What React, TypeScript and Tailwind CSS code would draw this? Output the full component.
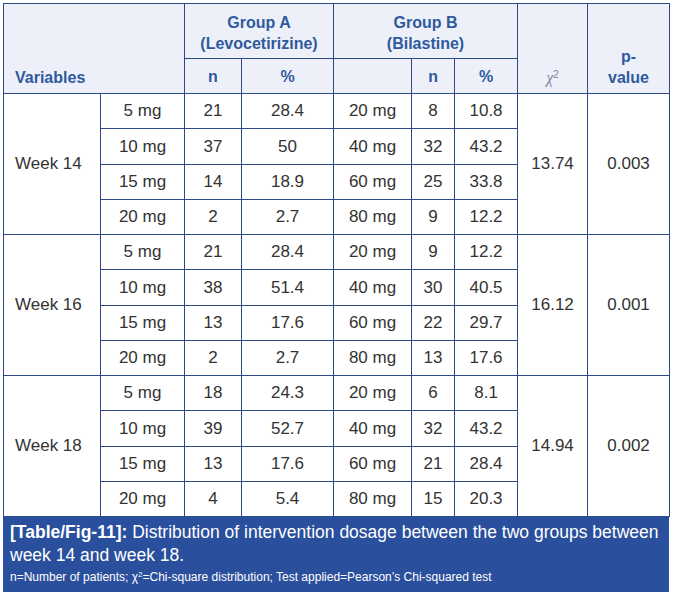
import React from 'react';

type Row = { dA: string; nA: string; pA: string; dB: string; nB: string; pB: string };

const weeks: { label: string; chi: string; p: string; rows: Row[] }[] = [
    {
        label: 'Week 14',
        chi: '13.74',
        p: '0.003',
        rows: [
            { dA: '5 mg', nA: '21', pA: '28.4', dB: '20 mg', nB: '8', pB: '10.8' },
            { dA: '10 mg', nA: '37', pA: '50', dB: '40 mg', nB: '32', pB: '43.2' },
            { dA: '15 mg', nA: '14', pA: '18.9', dB: '60 mg', nB: '25', pB: '33.8' },
            { dA: '20 mg', nA: '2', pA: '2.7', dB: '80 mg', nB: '9', pB: '12.2' },
        ],
    },
    {
        label: 'Week 16',
        chi: '16.12',
        p: '0.001',
        rows: [
            { dA: '5 mg', nA: '21', pA: '28.4', dB: '20 mg', nB: '9', pB: '12.2' },
            { dA: '10 mg', nA: '38', pA: '51.4', dB: '40 mg', nB: '30', pB: '40.5' },
            { dA: '15 mg', nA: '13', pA: '17.6', dB: '60 mg', nB: '22', pB: '29.7' },
            { dA: '20 mg', nA: '2', pA: '2.7', dB: '80 mg', nB: '13', pB: '17.6' },
        ],
    },
    {
        label: 'Week 18',
        chi: '14.94',
        p: '0.002',
        rows: [
            { dA: '5 mg', nA: '18', pA: '24.3', dB: '20 mg', nB: '6', pB: '8.1' },
            { dA: '10 mg', nA: '39', pA: '52.7', dB: '40 mg', nB: '32', pB: '43.2' },
            { dA: '15 mg', nA: '13', pA: '17.6', dB: '60 mg', nB: '21', pB: '28.4' },
            { dA: '20 mg', nA: '4', pA: '5.4', dB: '80 mg', nB: '15', pB: '20.3' },
        ],
    },
];

const th = 'border border-[#2c4a85] bg-[#eef0f9] text-[#2f5a9e] font-bold text-[16px] leading-[21px]';
const td = 'border border-[#2c4a85] text-center text-[#333333] text-[17px] p-0';

const App: React.FC = () => {
    return (
        <div className="bg-white w-[673px] h-[594px] pl-[3px] pt-[3px]" style={{ fontFamily: '"Liberation Sans", Arial, sans-serif' }}>
            <table className="border-collapse table-fixed w-[666px]">
                <colgroup>
                    <col className="w-[97px]" />
                    <col className="w-[84px]" />
                    <col className="w-[57px]" />
                    <col className="w-[92px]" />
                    <col className="w-[78px]" />
                    <col className="w-[43px]" />
                    <col className="w-[63px]" />
                    <col className="w-[70px]" />
                    <col className="w-[82px]" />
                </colgroup>
                <thead>
                    <tr className="h-[55px]">
                        <th colSpan={2} rowSpan={2} className={`${th} text-left align-bottom pl-[11px] pb-[5px]`}>Variables</th>
                        <th colSpan={2} className={`${th} text-center align-middle pt-[3px]`}>
                            Group A<br />(Levocetirizine)
                        </th>
                        <th colSpan={3} className={`${th} text-center align-middle pt-[3px]`}>
                            Group B<br />(Bilastine)
                        </th>
                        <th rowSpan={2} className={`${th} align-bottom pb-[5px] font-normal`}>
                            <span className="italic font-['Liberation_Serif',serif] text-[#7a86a8]">χ</span>
                            <sup className="text-[10px] text-[#7a86a8]">2</sup>
                        </th>
                        <th rowSpan={2} className={`${th} align-bottom pb-[5px]`}>
                            p-<br />value
                        </th>
                    </tr>
                    <tr className="h-[35px]">
                        <th className={`${th} text-center`}>n</th>
                        <th className={`${th} text-center`}>%</th>
                        <th className={th}></th>
                        <th className={`${th} text-center`}>n</th>
                        <th className={`${th} text-center`}>%</th>
                    </tr>
                </thead>
                <tbody>
                    {weeks.map((w) =>
                        w.rows.map((r, i) => (
                            <tr key={w.label + i} className="h-[35.25px]">
                                {i === 0 && (
                                    <td rowSpan={4} className={`${td} text-left pl-[11px]`}>
                                        {w.label}
                                    </td>
                                )}
                                <td className={td}>{r.dA}</td>
                                <td className={td}>{r.nA}</td>
                                <td className={td}>{r.pA}</td>
                                <td className={td}>{r.dB}</td>
                                <td className={td}>{r.nB}</td>
                                <td className={td}>{r.pB}</td>
                                {i === 0 && (
                                    <>
                                        <td rowSpan={4} className={td}>{w.chi}</td>
                                        <td rowSpan={4} className={td}>{w.p}</td>
                                    </>
                                )}
                            </tr>
                        ))
                    )}
                </tbody>
            </table>
            <div className="w-[666px] h-[75px] bg-[#2a4f9d] text-white pl-[7px] pr-[3px] pt-[4px]">
                <p className="text-[17.5px] leading-[23px]">
                    <span className="font-bold">[Table/Fig-11]:</span> Distribution of intervention dosage between the two groups between week 14 and week 18.
                </p>
                <p className="text-[12px] leading-[20px]">
                    n=Number of patients; χ<sup className="text-[8px]">2</sup>=Chi-square distribution; Test applied=Pearson’s Chi-squared test
                </p>
            </div>
        </div>
    );
};

export default App;
